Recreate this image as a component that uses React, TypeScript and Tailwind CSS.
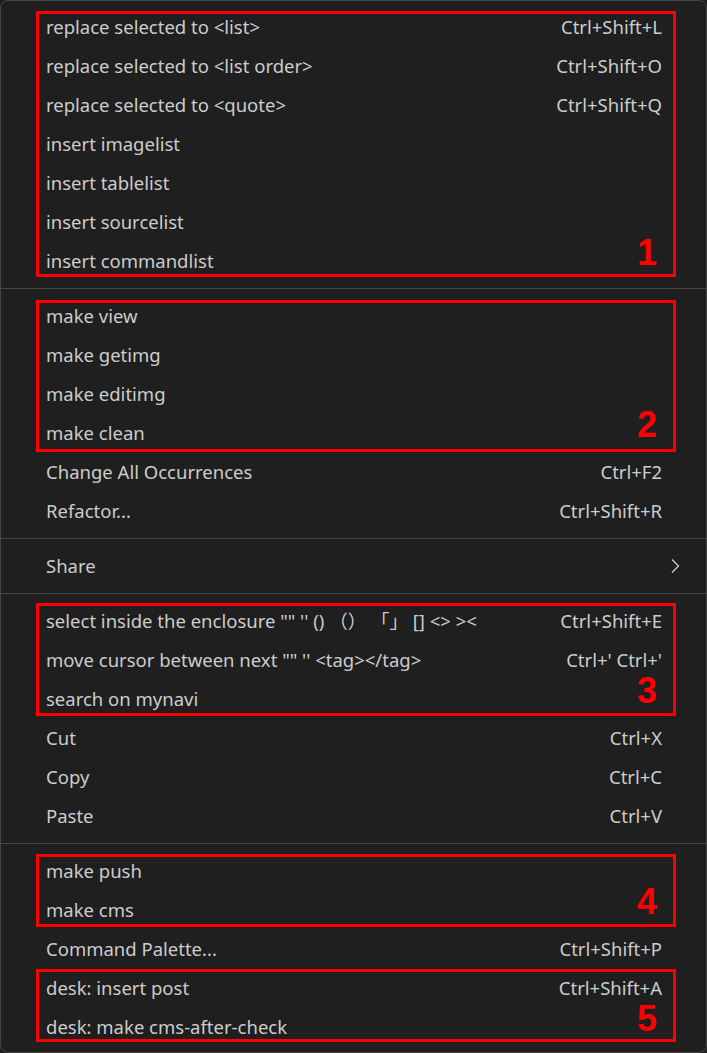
import React from "react";

type Item = { label: string; key?: string; sub?: boolean };

const FONT = { fontFamily: '"Noto Sans", "Open Sans", "Noto Sans CJK JP", sans-serif' };

function Row({ item }: { item: Item }) {
  return (
    <div className="flex h-[39px] items-center justify-between pl-[45px] pr-[44px] pt-[1px] text-[18.5px] text-[#cccccc]">
      <span className="whitespace-pre">{item.label}</span>
      {item.key && <span className="whitespace-pre">{item.key}</span>}
      {item.sub && (
        <svg width="10" height="16" viewBox="0 0 10 16" className="mr-[-18px]">
          <path d="M2 1.5 L8.5 8 L2 14.5" fill="none" stroke="#cccccc" strokeWidth="1.3" />
        </svg>
      )}
    </div>
  );
}

function Sep() {
  return (
    <div className="flex h-[16px] items-center">
      <div className="h-px w-full bg-[#454545]" />
    </div>
  );
}

function Boxed({
  items,
  n,
  top,
  bottom,
}: {
  items: Item[];
  n: string;
  top: string;
  bottom: string;
}) {
  return (
    <div className="relative">
      {items.map((it) => (
        <Row key={it.label} item={it} />
      ))}
      <div
        className={`pointer-events-none absolute left-[35px] right-[30px] border-[3px] border-[#ff0000] ${top} ${bottom}`}
      />
      <div
        className="pointer-events-none absolute bottom-[9px] right-[49px] text-[36px] font-bold leading-none text-[#ff0000]"
        style={{ fontFamily: '"Liberation Sans", Arial, sans-serif' }}
      >
        {n}
      </div>
    </div>
  );
}

export default function App() {
  return (
    <div className="h-[1053px] w-[707px] bg-[#1f1f1f]" style={FONT}>
      <div className="rounded-[8px] border border-[#454545] bg-[#1f1f1f] py-[6px]">
        <Boxed
          n="1"
          top="top-[4px]"
          bottom="bottom-[3px]"
          items={[
            { label: "replace selected to <list>", key: "Ctrl+Shift+L" },
            { label: "replace selected to <list order>", key: "Ctrl+Shift+O" },
            { label: "replace selected to <quote>", key: "Ctrl+Shift+Q" },
            { label: "insert imagelist" },
            { label: "insert tablelist" },
            { label: "insert sourcelist" },
            { label: "insert commandlist" },
          ]}
        />
        <Sep />
        <Boxed
          n="2"
          top="top-[4px]"
          bottom="bottom-[0px]"
          items={[
            { label: "make view" },
            { label: "make getimg" },
            { label: "make editimg" },
            { label: "make clean" },
          ]}
        />
        <Row item={{ label: "Change All Occurrences", key: "Ctrl+F2" }} />
        <Row item={{ label: "Refactor...", key: "Ctrl+Shift+R" }} />
        <Sep />
        <Row item={{ label: "Share", sub: true }} />
        <Sep />
        <Boxed
          n="3"
          top="top-[2px]"
          bottom="bottom-[2px]"
          items={[
            {
              label: 'select inside the enclosure "" \'\' () （） 「」 [] <> ><',
              key: "Ctrl+Shift+E",
            },
            { label: 'move cursor between next "" \'\' <tag></tag>', key: "Ctrl+' Ctrl+'" },
            { label: "search on mynavi" },
          ]}
        />
        <Row item={{ label: "Cut", key: "Ctrl+X" }} />
        <Row item={{ label: "Copy", key: "Ctrl+C" }} />
        <Row item={{ label: "Paste", key: "Ctrl+V" }} />
        <Sep />
        <Boxed
          n="4"
          top="top-[3px]"
          bottom="bottom-[2px]"
          items={[{ label: "make push" }, { label: "make cms" }]}
        />
        <Row item={{ label: "Command Palette...", key: "Ctrl+Shift+P" }} />
        <Boxed
          n="5"
          top="top-[1px]"
          bottom="bottom-[4px]"
          items={[
            { label: "desk: insert post", key: "Ctrl+Shift+A" },
            { label: "desk: make cms-after-check" },
          ]}
        />
      </div>
    </div>
  );
}
